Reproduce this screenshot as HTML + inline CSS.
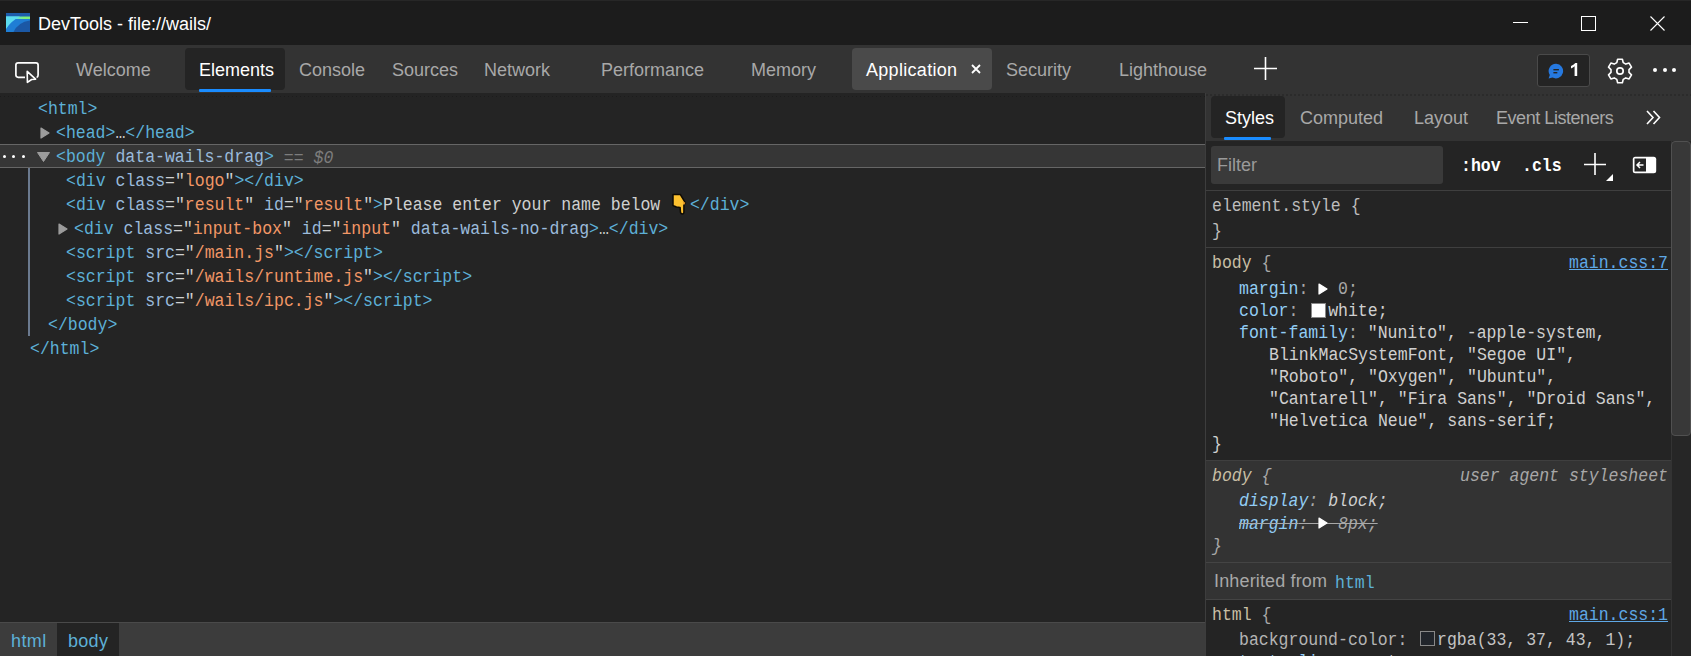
<!DOCTYPE html>
<html><head><meta charset="utf-8">
<style>
*{margin:0;padding:0;box-sizing:border-box}
html,body{width:1691px;height:656px;overflow:hidden;background:#242424}
body{position:relative;font-family:"Liberation Sans",sans-serif}
.a{position:absolute}
.s{position:absolute;font-family:"Liberation Sans",sans-serif;font-size:18px;line-height:20px;white-space:pre}
.m{position:absolute;font-family:"Liberation Mono",monospace;font-size:17.5px;line-height:20px;white-space:pre;color:#cfd0d0;transform:scaleX(0.9429);transform-origin:0 0}
.tg{color:#5db0d7}.an{color:#9bbbdc}.av{color:#f29766}.tx{color:#cfd0d0}
.pn{color:#92cdf5}.pv{color:#d0d0d0}.sel{color:#c8bfa4}.gr{color:#a8a8a8}
</style></head><body>

<!-- title bar -->
<div class="a" style="left:0;top:0;width:1691px;height:45px;background:#1c1c1c;border-top:1px solid #272727"></div>
<svg class="a" style="left:6px;top:13px" width="24" height="19" viewBox="0 0 24 19">
<defs><linearGradient id="gb" x1="0" x2="1" y1="0" y2="0"><stop offset="0.35" stop-color="#5cdcf0"/><stop offset="0.75" stop-color="#7df07c"/></linearGradient></defs>
<rect x="0" y="0" width="24" height="19" fill="#1b58a5"/>
<rect x="0" y="0" width="24" height="3.5" fill="#1d5cab"/>
<rect x="0" y="3.5" width="24" height="3.2" fill="url(#gb)"/>
<path d="M0 6H24V7.4Q12 9 7.5 19H0Z" fill="#1f7ed5"/>
<path d="M0 3.5H14Q5 8 0 16Z" fill="#5cdcf0"/>
</svg>
<div class="s" style="left:38px;top:14px;color:#fff">DevTools - file://wails/</div>
<div class="a" style="left:1513px;top:22px;width:15px;height:1px;background:#fff"></div>
<div class="a" style="left:1581px;top:16px;width:15px;height:15px;border:1px solid #fff"></div>
<svg class="a" style="left:1650px;top:16px" width="15" height="15" viewBox="0 0 15 15"><path d="M0.5 0.5L14.5 14.5M14.5 0.5L0.5 14.5" stroke="#fff" stroke-width="1.1"/></svg>

<!-- main tab bar -->
<div class="a" style="left:0;top:45px;width:1691px;height:48px;background:#333333"></div>
<svg class="a" style="left:15px;top:62px" width="25" height="22" viewBox="0 0 25 22">
<path d="M10 15.3H3.2Q0.9 15.3 0.9 13V3.1Q0.9 0.9 3.2 0.9H20.9Q23.1 0.9 23.1 3.1V13Q23.1 14.9 21.6 15.6" fill="none" stroke="#fff" stroke-width="1.7"/>
<path d="M12.2 9.4L20.6 17.2L16.6 17.5L12.4 20.4Z" fill="#333" stroke="#fff" stroke-width="1.6" stroke-linejoin="round"/>
</svg>
<div class="s" style="left:76px;top:60px;color:#a8a8a8">Welcome</div>
<div class="a" style="left:185px;top:48px;width:100px;height:42px;background:#242424;border-radius:4px"></div>
<div class="a" style="left:199px;top:89px;width:72px;height:3px;background:#1a8cff;border-radius:1px"></div>
<div class="s" style="left:199px;top:60px;color:#fff">Elements</div>
<div class="s" style="left:299px;top:60px;color:#a8a8a8">Console</div>
<div class="s" style="left:392px;top:60px;color:#a8a8a8">Sources</div>
<div class="s" style="left:484px;top:60px;color:#a8a8a8">Network</div>
<div class="s" style="left:601px;top:60px;color:#a8a8a8">Performance</div>
<div class="s" style="left:751px;top:60px;color:#a8a8a8">Memory</div>
<div class="a" style="left:852px;top:48px;width:140px;height:42px;background:#4a4a4a;border-radius:4px"></div>
<div class="s" style="left:866px;top:60px;color:#fff;letter-spacing:0.3px">Application</div>
<svg class="a" style="left:971px;top:64px" width="10" height="10" viewBox="0 0 10 10"><path d="M1 1L9 9M9 1L1 9" stroke="#fff" stroke-width="1.8"/></svg>
<div class="s" style="left:1006px;top:60px;color:#a8a8a8">Security</div>
<div class="s" style="left:1119px;top:60px;color:#a8a8a8">Lighthouse</div>
<svg class="a" style="left:1254px;top:57px" width="23" height="23" viewBox="0 0 23 23"><path d="M11.5 0V23M0 11.5H23" stroke="#fff" stroke-width="1.6"/></svg>
<div class="a" style="left:1537px;top:54px;width:53px;height:33px;background:#242424;border:1px solid #4a4a4a;border-radius:3px"></div>
<svg class="a" style="left:1548px;top:63px" width="17" height="17" viewBox="0 0 17 17">
<path d="M8.2 0.8A7.3 7.3 0 1 1 4.5 14.6L0.6 15.6L1.8 12A7.3 7.3 0 0 1 8.2 0.8Z" fill="#2679e0"/>
<rect x="5.4" y="6" width="5.5" height="1.4" fill="#242424"/><rect x="5.4" y="9" width="3.9" height="1.4" fill="#242424"/>
</svg>
<svg class="a" style="left:1570px;top:62px" width="9" height="15" viewBox="0 0 9 15"><path d="M7.2 0.9V14H4.6V4.3Q3.1 5.6 1 6.4V3.9Q3.6 2.8 5.3 0.9Z" fill="#fff"/></svg>
<svg class="a" style="left:1606px;top:57px" width="28" height="28" viewBox="0 0 28 28">
<path d="M11.6 2.2H16.4L17.2 5.6L19.8 7.1L23.1 6.1L25.5 10.2L23 12.6V15.4L25.5 17.8L23.1 21.9L19.8 20.9L17.2 22.4L16.4 25.8H11.6L10.8 22.4L8.2 20.9L4.9 21.9L2.5 17.8L5 15.4V12.6L2.5 10.2L4.9 6.1L8.2 7.1L10.8 5.6Z" fill="none" stroke="#fff" stroke-width="1.6" stroke-linejoin="round"/>
<circle cx="14" cy="14" r="3.2" fill="none" stroke="#fff" stroke-width="1.7"/>
</svg>
<div class="a" style="left:1653px;top:68px;width:4px;height:4px;border-radius:2px;background:#fff"></div>
<div class="a" style="left:1663px;top:68px;width:4px;height:4px;border-radius:2px;background:#fff"></div>
<div class="a" style="left:1672px;top:68px;width:4px;height:4px;border-radius:2px;background:#fff"></div>

<!-- elements pane -->
<div class="a" style="left:0;top:93px;width:1205px;height:529px;background:#242424"></div>
<div class="a" style="left:0;top:144px;width:1205px;height:24px;background:#363636;border-top:1px solid #666;border-bottom:1px solid #666"></div>
<div class="a" style="left:28px;top:168px;width:2px;height:168px;background:#6b7a8f"></div>

<div class="m" style="left:38px;top:99px"><span class="tg">&lt;html&gt;</span></div>
<svg class="a" style="left:40px;top:127px" width="10" height="12" viewBox="0 0 10 12"><path d="M1 1L9 6L1 11Z" fill="#9c9c9c" stroke="#9c9c9c" stroke-width="1.2" stroke-linejoin="round"/></svg>
<div class="m" style="left:56px;top:123px"><span class="tg">&lt;head&gt;</span><span class="tx">…</span><span class="tg">&lt;/head&gt;</span></div>
<div class="a" style="left:3px;top:155px;width:3px;height:3px;border-radius:2px;background:#fff"></div>
<div class="a" style="left:12px;top:155px;width:3px;height:3px;border-radius:2px;background:#fff"></div>
<div class="a" style="left:22px;top:155px;width:3px;height:3px;border-radius:2px;background:#fff"></div>
<svg class="a" style="left:37px;top:152px" width="13" height="10" viewBox="0 0 13 10"><path d="M0.5 0.5H12.5L6.5 9.5Z" fill="#9c9c9c" stroke="#9c9c9c" stroke-width="1" stroke-linejoin="round"/></svg>
<div class="m" style="left:56px;top:147px"><span class="tg">&lt;body</span> <span class="an">data-wails-drag</span><span class="tg">&gt;</span> <span style="color:#7d7d7d;font-style:italic;position:relative;top:1px">== $0</span></div>
<div class="m" style="left:66px;top:171px"><span class="tg">&lt;div</span> <span class="an">class</span><span class="tx">="</span><span class="av">logo</span><span class="tx">"</span><span class="tg">&gt;&lt;/div&gt;</span></div>
<div class="m" style="left:66px;top:195px"><span class="tg">&lt;div</span> <span class="an">class</span><span class="tx">="</span><span class="av">result</span><span class="tx">"</span> <span class="an">id</span><span class="tx">="</span><span class="av">result</span><span class="tx">"</span><span class="tg">&gt;</span><span class="tx">Please enter your name below   </span><span class="tg">&lt;/div&gt;</span></div>
<svg class="a" style="left:671px;top:192px" width="17" height="24" viewBox="0 0 17 24">
<path d="M2 2.6H9.4L14.4 10.8L12.9 13.2V20.6Q12.7 21.9 11.2 21.9Q9.6 21.8 9.5 20.4L9.1 15.4L5.4 15L3.6 14.2L2 13.6Z" fill="#fdc12f" stroke="#0e0a04" stroke-width="1.5" stroke-linejoin="round"/>
<path d="M12.9 13.2L14.4 10.8L11.6 9.2Z" fill="#e89a2a"/>
</svg>
<svg class="a" style="left:58px;top:223px" width="10" height="12" viewBox="0 0 10 12"><path d="M1 1L9 6L1 11Z" fill="#9c9c9c" stroke="#9c9c9c" stroke-width="1.2" stroke-linejoin="round"/></svg>
<div class="m" style="left:74px;top:219px"><span class="tg">&lt;div</span> <span class="an">class</span><span class="tx">="</span><span class="av">input-box</span><span class="tx">"</span> <span class="an">id</span><span class="tx">="</span><span class="av">input</span><span class="tx">"</span> <span class="an">data-wails-no-drag</span><span class="tg">&gt;</span><span class="tx">…</span><span class="tg">&lt;/div&gt;</span></div>
<div class="m" style="left:66px;top:243px"><span class="tg">&lt;script</span> <span class="an">src</span><span class="tx">="</span><span class="av">/main.js</span><span class="tx">"</span><span class="tg">&gt;&lt;/script&gt;</span></div>
<div class="m" style="left:66px;top:267px"><span class="tg">&lt;script</span> <span class="an">src</span><span class="tx">="</span><span class="av">/wails/runtime.js</span><span class="tx">"</span><span class="tg">&gt;&lt;/script&gt;</span></div>
<div class="m" style="left:66px;top:291px"><span class="tg">&lt;script</span> <span class="an">src</span><span class="tx">="</span><span class="av">/wails/ipc.js</span><span class="tx">"</span><span class="tg">&gt;&lt;/script&gt;</span></div>
<div class="m" style="left:48px;top:315px"><span class="tg">&lt;/body&gt;</span></div>
<div class="m" style="left:30px;top:339px"><span class="tg">&lt;/html&gt;</span></div>

<div class="a" style="left:0;top:96px;width:1205px;height:1px;background:repeating-linear-gradient(90deg,#1c1c1c 0 1px,transparent 1px 4px)"></div>
<!-- breadcrumbs -->
<div class="a" style="left:0;top:622px;width:1205px;height:34px;background:#3c3c3c;border-top:1px solid #4a4a4a"></div>
<div class="a" style="left:57px;top:623px;width:62px;height:33px;background:#242424"></div>
<div class="s" style="left:11px;top:631px;color:#5db0d7;letter-spacing:0.4px">html</div>
<div class="s" style="left:68px;top:631px;color:#5db0d7;letter-spacing:0.3px">body</div>

<!-- divider -->
<div class="a" style="left:1205px;top:93px;width:1px;height:563px;background:#3d3d3d"></div>

<!-- styles pane -->
<div class="a" style="left:1206px;top:93px;width:485px;height:48px;background:#333333"></div>
<div class="a" style="left:1206px;top:94px;width:485px;height:2px;background:repeating-linear-gradient(90deg,#2b2b2b 0 2px,transparent 2px 4px)"></div>
<div class="a" style="left:1211px;top:96px;width:74px;height:42px;background:#242424;border-radius:4px"></div>
<div class="a" style="left:1224px;top:137px;width:47px;height:3px;background:#1a8cff;border-radius:1px"></div>
<div class="s" style="left:1225px;top:108px;color:#fff">Styles</div>
<div class="s" style="left:1300px;top:108px;color:#a8a8a8">Computed</div>
<div class="s" style="left:1414px;top:108px;color:#a8a8a8">Layout</div>
<div class="s" style="left:1496px;top:108px;color:#a8a8a8;letter-spacing:-0.45px">Event Listeners</div>
<svg class="a" style="left:1645px;top:109px" width="17" height="17" viewBox="0 0 17 17"><path d="M2 2L8 8.5L2 15M8.5 2L14.5 8.5L8.5 15" fill="none" stroke="#fff" stroke-width="1.6"/></svg>

<div class="a" style="left:1206px;top:141px;width:465px;height:49px;background:#242424"></div>
<div class="a" style="left:1211px;top:146px;width:232px;height:38px;background:#3a3a3a;border-radius:3px"></div>
<div class="s" style="left:1217px;top:155px;color:#9a9a9a">Filter</div>
<div class="m" style="left:1461px;top:156px;color:#fff;font-weight:bold">:hov</div>
<div class="m" style="left:1522px;top:156px;color:#fff;font-weight:bold">.cls</div>
<svg class="a" style="left:1583px;top:152px" width="32" height="32" viewBox="0 0 32 32"><path d="M12 1V23M1 12.5H23" stroke="#fff" stroke-width="1.6"/><path d="M30 22V29H23Z" fill="#fff"/></svg>
<svg class="a" style="left:1632px;top:156px" width="25" height="18" viewBox="0 0 25 18"><rect x="0.8" y="0.8" width="23.4" height="16.4" rx="2.5" fill="#fff"/><rect x="2.5" y="2.5" width="11.5" height="13" fill="#242424"/><path d="M11.5 9H5M8 6L5 9L8 12" fill="none" stroke="#fff" stroke-width="1.5"/></svg>

<div class="a" style="left:1206px;top:190px;width:465px;height:1px;background:#3f3f3f"></div>
<div class="m" style="left:1212px;top:196px;color:#bdbdbd">element.style {</div>
<div class="m" style="left:1212px;top:221px;color:#bdbdbd">}</div>
<div class="a" style="left:1206px;top:247px;width:465px;height:1px;background:#3f3f3f"></div>

<div class="m" style="left:1212px;top:253px"><span class="sel">body</span> <span class="gr">{</span></div>
<div class="m" style="left:1569px;top:253px;color:#5fa8e6;text-decoration:underline">main.css:7</div>
<div class="m" style="left:1239px;top:279px"><span class="pn">margin</span><span class="gr">: </span>  <span class="gr">0;</span></div>
<svg class="a" style="left:1318px;top:283px" width="10" height="12" viewBox="0 0 10 12"><path d="M1 1L9 6L1 11Z" fill="#fff" stroke="#fff" stroke-width="1.2" stroke-linejoin="round"/></svg>
<div class="m" style="left:1239px;top:301px"><span class="pn">color</span><span class="gr">: </span>  <span class="pv">white;</span></div>
<div class="a" style="left:1311px;top:303px;width:15px;height:15px;background:#fff;border:1px solid #888"></div>
<div class="m" style="left:1239px;top:323px"><span class="pn">font-family</span><span class="gr">: </span><span class="pv">"Nunito", -apple-system,</span></div>
<div class="m" style="left:1269px;top:345px"><span class="pv">BlinkMacSystemFont, "Segoe UI",</span></div>
<div class="m" style="left:1269px;top:367px"><span class="pv">"Roboto", "Oxygen", "Ubuntu",</span></div>
<div class="m" style="left:1269px;top:389px"><span class="pv">"Cantarell", "Fira Sans", "Droid Sans",</span></div>
<div class="m" style="left:1269px;top:411px"><span class="pv">"Helvetica Neue", sans-serif;</span></div>
<div class="m" style="left:1212px;top:434px;color:#cfd0d0">}</div>
<div class="a" style="left:1206px;top:460px;width:465px;height:1px;background:#3f3f3f"></div>

<div class="a" style="left:1206px;top:461px;width:465px;height:101px;background:#333333"></div>
<div class="m" style="left:1212px;top:466px;font-style:italic"><span class="sel">body</span> <span class="gr">{</span></div>
<div class="m" style="left:1460px;top:466px;font-style:italic;color:#a8a8a8">user agent stylesheet</div>
<div class="m" style="left:1239px;top:491px;font-style:italic"><span class="pn">display</span><span class="gr">: </span><span class="pv">block;</span></div>
<div class="m" style="left:1239px;top:514px;font-style:italic;text-decoration:line-through;color:#a8a8a8"><span class="pn">margin</span><span class="gr">: </span>  <span class="gr">8px;</span></div>
<svg class="a" style="left:1318px;top:517px" width="10" height="12" viewBox="0 0 10 12"><path d="M1 1L9 6L1 11Z" fill="#fff" stroke="#fff" stroke-width="1.2" stroke-linejoin="round"/></svg>
<div class="m" style="left:1212px;top:536px;font-style:italic;color:#a8a8a8">}</div>
<div class="a" style="left:1206px;top:562px;width:465px;height:1px;background:#444"></div>
<div class="a" style="left:1206px;top:563px;width:465px;height:36px;background:#333333"></div>
<div class="s" style="left:1214px;top:571px;color:#a8a8a8;letter-spacing:0.15px">Inherited from</div>
<div class="m" style="left:1335px;top:573px;color:#5db0d7">html</div>
<div class="a" style="left:1206px;top:599px;width:465px;height:1px;background:#444"></div>
<div class="m" style="left:1212px;top:605px"><span class="sel">html</span> <span class="gr">{</span></div>
<div class="m" style="left:1569px;top:605px;color:#5fa8e6;text-decoration:underline">main.css:1</div>
<div class="m" style="left:1239px;top:630px"><span style="color:#b4b4b4">background-color: </span>  <span style="color:#c4c4c4">rgba(33, 37, 43, 1);</span></div>
<div class="a" style="left:1420px;top:631px;width:15px;height:15px;background:#21252b;border:1px solid #888"></div>

<div class="m" style="left:1239px;top:652px"><span class="pn">text-align</span><span class="gr">: </span><span class="pv">center;</span></div>
<!-- scrollbar -->
<div class="a" style="left:1671px;top:141px;width:20px;height:515px;background:#262626;border-left:1px solid #333"></div>
<div class="a" style="left:1671px;top:141px;width:20px;height:295px;background:#383838;border:1px solid #505050;border-radius:4px 4px 4px 4px"></div>

</body></html>
